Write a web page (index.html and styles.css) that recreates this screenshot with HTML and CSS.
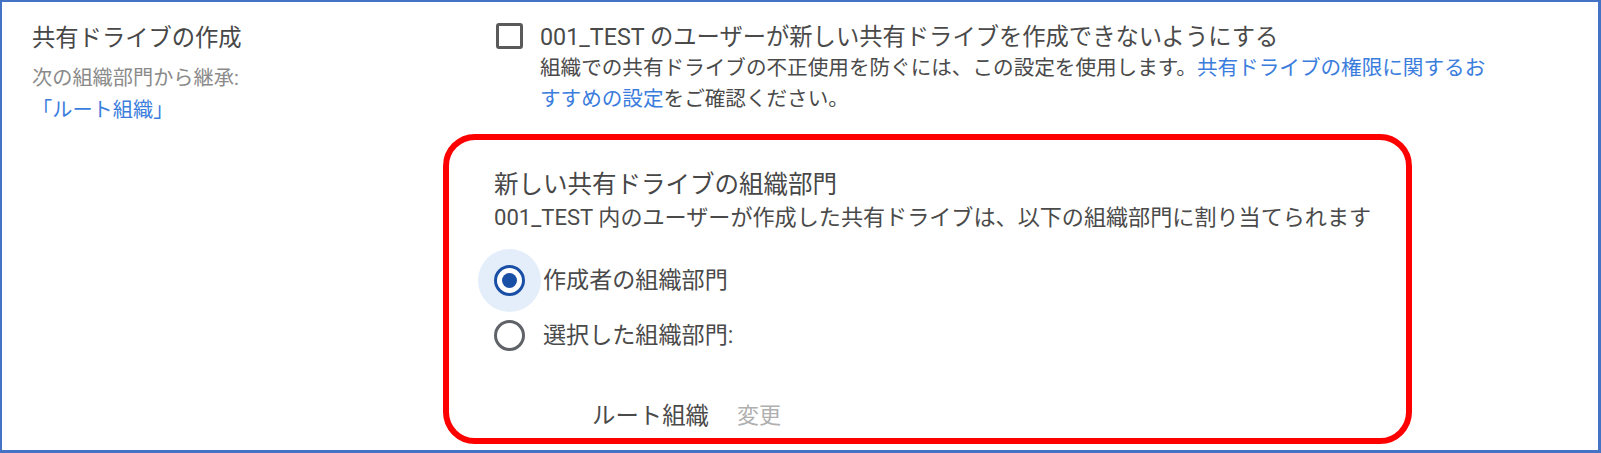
FILE: index.html
```html
<!DOCTYPE html>
<html lang="ja">
<head>
<meta charset="utf-8">
<title>共有ドライブの作成</title>
<link rel="stylesheet" href="styles.css">
</head>
<body>
<div class="frame">
  <div class="left">
    <div class="title">共有ドライブの作成</div>
    <div class="inherit">次の組織部門から継承:</div>
    <div class="inherit-link">「ルート組織」</div>
  </div>
  <div class="right">
    <div class="check-row">
      <span class="checkbox"></span>
      <div class="check-text">
        <div class="check-label">001_TEST のユーザーが新しい共有ドライブを作成できないようにする</div>
        <div class="check-desc">組織での共有ドライブの不正使用を防ぐには、この設定を使用します。<span class="link">共有ドライブの権限に関するお<br>すすめの設定</span>をご確認ください。</div>
      </div>
    </div>
    <div class="redbox">
      <div class="box-title">新しい共有ドライブの組織部門</div>
      <div class="box-desc">001_TEST 内のユーザーが作成した共有ドライブは、以下の組織部門に割り当てられます</div>
      <div class="radio-row first">
        <span class="radio checked"></span>
        <span class="radio-label">作成者の組織部門</span>
      </div>
      <div class="radio-row">
        <span class="radio"></span>
        <span class="radio-label">選択した組織部門:</span>
      </div>
      <div class="ou-row">
        <span class="ou-name">ルート組織</span>
        <span class="ou-change">変更</span>
      </div>
    </div>
  </div>
</div>
</body>
</html>
```
FILE: styles.css
```css
html, body {
  margin: 0;
  padding: 0;
  background: #ffffff;
}

body {
  font-family: Roboto, "Noto Sans CJK JP", sans-serif;
  color: #4a4a4a;
}

.frame {
  box-sizing: border-box;
  width: 1601px;
  height: 453px;
  border-style: solid;
  border-color: #4472c4;
  border-width: 2px 3px 3px 2px;
  padding: 20px 0 0 30px;
  display: flex;
  align-items: flex-start;
  overflow: hidden;
}

.left {
  width: 411px;
  flex: none;
  display: flex;
  flex-direction: column;
}

.title {
  font-size: 23.3px;
  line-height: 32px;
  color: #474747;
}

.inherit {
  margin-top: 8px;
  font-size: 20.2px;
  line-height: 32px;
  color: #8a8a8a;
}

.inherit-link {
  font-size: 20.2px;
  line-height: 32px;
  color: #3b7ddd;
}

.right {
  display: flex;
  flex-direction: column;
}

.check-row {
  display: flex;
  align-items: flex-start;
  margin-left: 53px;
  gap: 17px;
}

.checkbox {
  flex: none;
  box-sizing: border-box;
  width: 27px;
  height: 26px;
  border: 3px solid #5a5a5a;
  border-radius: 3px;
  margin-top: 1px;
}

.check-text {
  display: flex;
  flex-direction: column;
}

.check-label {
  font-size: 23.3px;
  line-height: 31px;
  color: #4a4a4a;
}

.check-desc {
  font-size: 20.6px;
  line-height: 31px;
  color: #4a4a4a;
}

.link {
  color: #3b7ddd;
}

.redbox {
  box-sizing: border-box;
  width: 969px;
  height: 310px;
  margin-top: 19px;
  border: 6px solid #ff0000;
  border-radius: 32px;
  padding: 28px 20px 0 45px;
  display: flex;
  flex-direction: column;
}

.box-title {
  font-size: 24.5px;
  line-height: 34px;
  color: #474747;
}

.box-desc {
  font-size: 22.1px;
  line-height: 30px;
  color: #4a4a4a;
}

.radio-row {
  display: flex;
  align-items: center;
  gap: 18px;
  height: 55px;
}

.radio-row.first {
  margin-top: 21px;
}

.radio {
  flex: none;
  box-sizing: border-box;
  width: 31px;
  height: 31px;
  border: 3px solid #5f6368;
  border-radius: 50%;
  display: flex;
  align-items: center;
  justify-content: center;
}

.radio.checked {
  border-color: #1a4fa6;
  box-shadow: 0 0 0 16px #e4eefb;
}

.radio.checked::after {
  content: "";
  width: 15px;
  height: 15px;
  border-radius: 50%;
  background: #1a4fa6;
}

.radio-label {
  font-size: 23.1px;
  line-height: 32px;
  color: #4a4a4a;
}

.ou-row {
  display: flex;
  align-items: center;
  gap: 28px;
  margin-top: 37px;
  margin-left: 98px;
}

.ou-name {
  font-size: 23.4px;
  line-height: 32px;
  color: #4a4a4a;
}

.ou-change {
  font-size: 22px;
  line-height: 32px;
  color: #b0b0b0;
}
```
